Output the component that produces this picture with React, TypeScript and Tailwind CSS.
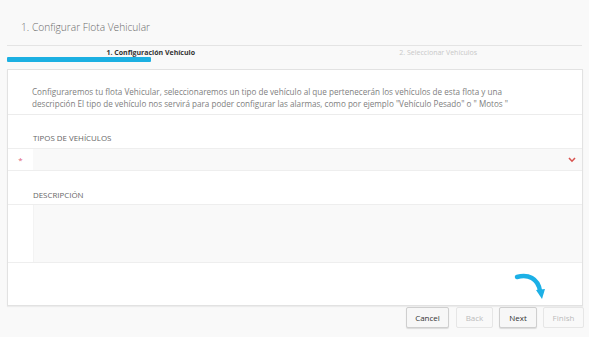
import React from "react";

export default function App() {
  return (
    <div className="relative w-[589px] h-[337px] overflow-hidden bg-[#f9f9f9] font-['Open_Sans',sans-serif] text-[#555]">
      <div className="h-[45px] pl-[21px] pt-[15px] text-[10.2px] leading-[16px] font-light text-[#6a6a6a] [transform:scaleY(1.14)] origin-top-left">
        1. Configurar Flota Vehicular
      </div>
      <div className="mx-[7px] border-t border-[#e4e4e4]">
        <div className="flex h-[11px] items-center pt-[2px] text-[7px] leading-[9px]">
          <div className="flex-1 text-center font-bold text-[#333]">1. Configuración Vehículo</div>
          <div className="flex-1 text-center text-[#c8c8c8]">2. Seleccionar Vehículos</div>
        </div>
        <div className="h-[5px] w-[144px] rounded-[1px] bg-[#1cb0e2]" />
      </div>
      <div className="mx-[7px] mt-[7px] h-[237px] w-[576px] border border-[#e2e2e2] bg-white shadow-[0_1px_1px_rgba(0,0,0,0.05)]">
        <div className="h-[45px] border-b border-[#ececec] pl-[24px] pt-[16px] text-[8.15px] leading-[11.5px] text-[#808080]">
          Configuraremos tu flota Vehicular, seleccionaremos un tipo de vehículo al que pertenecerán los vehículos de esta flota y una
          <br />
          descripción El tipo de vehículo nos servirá para poder configurar las alarmas, como por ejemplo "Vehículo Pesado" o " Motos "
        </div>
        <div className="h-[33px] pl-[25px] pt-[18px] text-[7.9px] leading-[10px] text-[#666]">TIPOS DE VEHÍCULOS</div>
        <div className="flex h-[23px] border-y border-[#eeeeee]">
          <div className="flex w-[25px] items-center justify-center text-[8px] text-[#e0607a]">*</div>
          <div className="relative flex-1 bg-[#f9f9f9]">
            <svg className="absolute right-[6px] top-[8px]" width="8" height="6" viewBox="0 0 8 6">
              <path d="M1 1 L4 4.2 L7 1" fill="none" stroke="#d9534f" strokeWidth="1.6" />
            </svg>
          </div>
        </div>
        <div className="h-[33px] pl-[25px] pt-[19px] text-[7.9px] leading-[10px] text-[#666]">DESCRIPCIÓN</div>
        <div className="flex h-[59px] border-y border-[#eeeeee]">
          <div className="w-[25px]" />
          <div className="flex-1 border-l border-[#f3f3f3] bg-[#f9f9f9]" />
        </div>
      </div>
      <div className="flex justify-end gap-[6px] pr-[5px] pt-[1px] text-[8px]">
        <button className="h-[21px] w-[43px] rounded-[2px] border border-[#cfcfcf] bg-[#f7f7f7] text-[#333] shadow-[0_1px_1px_rgba(0,0,0,0.12)]">Cancel</button>
        <button className="ml-[1px] h-[21px] w-[37px] rounded-[2px] border border-[#e6e6e6] bg-[#f9f9f9] text-[#bbb]">Back</button>
        <button className="h-[21px] w-[38px] rounded-[2px] border border-[#cfcfcf] bg-[#f7f7f7] text-[#333] shadow-[0_1px_1px_rgba(0,0,0,0.12)]">Next</button>
        <button className="h-[21px] w-[41px] rounded-[2px] border border-[#e6e6e6] bg-[#f9f9f9] text-[#bbb]">Finish</button>
      </div>
      <svg className="absolute left-[514px] top-[271px]" width="34" height="30" viewBox="0 0 34 30">
        <path d="M3 6 C 14 3, 24 7, 26 20" fill="none" stroke="#1cb0e6" strokeWidth="4.5" strokeLinecap="round" />
        <path d="M22 19 L31 18 L28 28 Z" fill="#1cb0e6" />
      </svg>
    </div>
  );
}
